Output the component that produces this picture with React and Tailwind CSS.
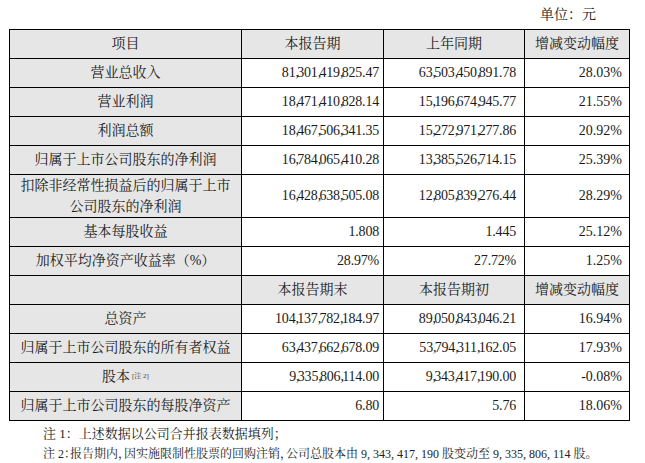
import React from "react";

const FONT = '"Liberation Serif", "Noto Serif CJK SC", "Noto Sans CJK SC", serif';

function Num({ v }) {
  const parts = v.split(",");
  return (
    <span className="tracking-[-0.2px]">
      {parts.map((p, i) => (
        <React.Fragment key={i}>
          {p}
          {i < parts.length - 1 && <span className="mr-[-1.5px]">,</span>}
        </React.Fragment>
      ))}
    </span>
  );
}

const rows1 = [
  ["营业总收入", "81,301,419,825.47", "63,503,450,891.78", "28.03%"],
  ["营业利润", "18,471,410,828.14", "15,196,674,945.77", "21.55%"],
  ["利润总额", "18,467,506,341.35", "15,272,971,277.86", "20.92%"],
  ["归属于上市公司股东的净利润", "16,784,065,410.28", "13,385,526,714.15", "25.39%"],
];

const rows2 = [
  ["基本每股收益", "1.808", "1.445", "25.12%"],
  ["加权平均净资产收益率（%）", "28.97%", "27.72%", "1.25%"],
];

const rows3 = [
  ["总资产", "104,137,782,184.97", "89,050,843,046.21", "16.94%"],
  ["归属于上市公司股东的所有者权益", "63,437,662,678.09", "53,794,311,162.05", "17.93%"],
  ["股本", "9,335,806,114.00", "9,343,417,190.00", "-0.08%"],
  ["归属于上市公司股东的每股净资产", "6.80", "5.76", "18.06%"],
];

const td = "border border-black p-0 align-middle";
const labelCell = `${td} bg-[#e6e6e6] text-center`;
const n2 = `${td} text-right pr-[4px]`;
const n3 = `${td} text-right pr-[8px]`;
const n4 = `${td} text-right pr-[7px]`;

function DataRow({ r, sup, h = "h-[29px]" }) {
  return (
    <tr className={h}>
      <td className={labelCell}>
        {r[0]}
        {sup && (
          <sup className="text-[7px] text-[#444] ml-[2px] relative top-[-3px]">[注 2]</sup>
        )}
      </td>
      <td className={n2}><Num v={r[1]} /></td>
      <td className={n3}><Num v={r[2]} /></td>
      <td className={n4}>{r[3]}</td>
    </tr>
  );
}

export default function App() {
  return (
    <div
      className="w-[645px] h-[463px] bg-white text-[#1a1a1a] overflow-hidden"
      style={{ fontFamily: FONT }}
    >
      <div className="h-[29px] flex items-center justify-end pr-[49px] text-[14px]">
        单位：元
      </div>
      <table className="ml-[9px] w-[620px] table-fixed border-collapse text-[14px] leading-[20px]">
        <colgroup>
          <col className="w-[232px]" />
          <col className="w-[142px]" />
          <col className="w-[141px]" />
          <col className="w-[105px]" />
        </colgroup>
        <tbody>
          <tr className="h-[29px] bg-[#e6e6e6]">
            <td className={`${td} text-center`}>项目</td>
            <td className={`${td} text-center`}>本报告期</td>
            <td className={`${td} text-center`}>上年同期</td>
            <td className={`${td} text-center`}>增减变动幅度</td>
          </tr>
          {rows1.map((r) => (
            <DataRow key={r[0]} r={r} />
          ))}
          <tr className="h-[43px]">
            <td className={`${labelCell} leading-[21px]`}>
              扣除非经常性损益后的归属于上市
              <br />
              公司股东的净利润
            </td>
            <td className={n2}><Num v="16,428,638,505.08" /></td>
            <td className={n3}><Num v="12,805,839,276.44" /></td>
            <td className={n4}>28.29%</td>
          </tr>
          {rows2.map((r) => (
            <DataRow key={r[0]} r={r} />
          ))}
          <tr className="h-[29px] bg-[#e6e6e6]">
            <td className={td}></td>
            <td className={`${td} text-center`}>本报告期末</td>
            <td className={`${td} text-center`}>本报告期初</td>
            <td className={`${td} text-center`}>增减变动幅度</td>
          </tr>
          {rows3.map((r) => (
            <DataRow key={r[0]} r={r} sup={r[0] === "股本"} />
          ))}
        </tbody>
      </table>
      <div className="pl-[43px] pt-[2px] leading-[21px] text-[#222]">
        <div className="text-[13px]">注 1：上述数据以公司合并报表数据填列；</div>
        <div className="text-[12px] whitespace-nowrap [font-feature-settings:'halt']">
          注 2：报告期内，因实施限制性股票的回购注销，公司总股本由 9, 343, 417, 190 股变动至 9, 335, 806, 114 股。
        </div>
      </div>
    </div>
  );
}
